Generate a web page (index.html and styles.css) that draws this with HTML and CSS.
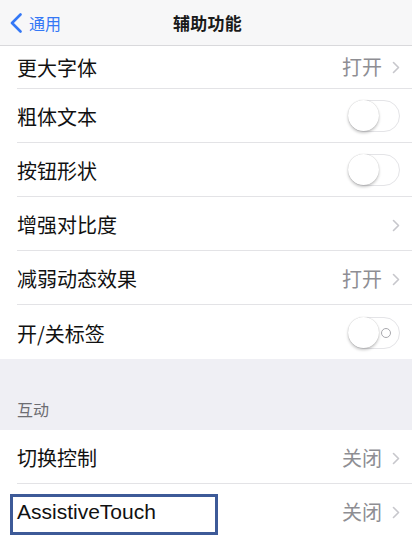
FILE: index.html
```html
<!DOCTYPE html>
<html lang="zh-CN">
<head>
<meta charset="utf-8">
<link rel="stylesheet" href="styles.css">
</head>
<body>
<div class="screen">
  <header class="nav">
    <div class="nav-back">
      <svg class="back-chev" width="12" height="20" viewBox="0 0 12 20"><path d="M10.5 1.5 L2 10 L10.5 18.5" fill="none" stroke="#3478f6" stroke-width="2.6" stroke-linecap="round" stroke-linejoin="round"/></svg>
      <span class="back-text">通用</span>
    </div>
    <div class="nav-title">辅助功能</div>
    <div></div>
  </header>

  <section class="group">
    <div class="row row-cut"><div class="row-inner"><span class="label">更大字体</span><span class="detail">打开<svg class="chev" width="8" height="13" viewBox="0 0 8 13"><path d="M1.5 1.5 L6.5 6.5 L1.5 11.5" fill="none" stroke="#c7c7cc" stroke-width="1.6" stroke-linecap="round" stroke-linejoin="round"/></svg></span></div></div>
    <div class="row"><div class="row-inner"><span class="label">粗体文本</span><span class="toggle"><span class="knob"></span></span></div></div>
    <div class="row"><div class="row-inner"><span class="label">按钮形状</span><span class="toggle"><span class="knob"></span></span></div></div>
    <div class="row"><div class="row-inner"><span class="label">增强对比度</span><span class="detail"><svg class="chev" width="8" height="13" viewBox="0 0 8 13"><path d="M1.5 1.5 L6.5 6.5 L1.5 11.5" fill="none" stroke="#c7c7cc" stroke-width="1.6" stroke-linecap="round" stroke-linejoin="round"/></svg></span></div></div>
    <div class="row"><div class="row-inner"><span class="label">减弱动态效果</span><span class="detail">打开<svg class="chev" width="8" height="13" viewBox="0 0 8 13"><path d="M1.5 1.5 L6.5 6.5 L1.5 11.5" fill="none" stroke="#c7c7cc" stroke-width="1.6" stroke-linecap="round" stroke-linejoin="round"/></svg></span></div></div>
    <div class="row row-last"><div class="row-inner"><span class="label">开/关标签</span><span class="toggle"><span class="knob"></span><span class="off-mark"></span></span></div></div>
  </section>

  <div class="section-header">互动</div>

  <section class="group">
    <div class="row"><div class="row-inner"><span class="label">切换控制</span><span class="detail">关闭<svg class="chev" width="8" height="13" viewBox="0 0 8 13"><path d="M1.5 1.5 L6.5 6.5 L1.5 11.5" fill="none" stroke="#c7c7cc" stroke-width="1.6" stroke-linecap="round" stroke-linejoin="round"/></svg></span></div></div>
    <div class="row row-last"><div class="row-inner"><span class="label label-latin">AssistiveTouch</span><span class="detail">关闭<svg class="chev" width="8" height="13" viewBox="0 0 8 13"><path d="M1.5 1.5 L6.5 6.5 L1.5 11.5" fill="none" stroke="#c7c7cc" stroke-width="1.6" stroke-linecap="round" stroke-linejoin="round"/></svg></span><span class="highlight"></span></div></div>
  </section>
</div>
</body>
</html>
```

FILE: styles.css
```css
* { box-sizing: border-box; }
html, body { margin: 0; padding: 0; }
body {
  width: 412px;
  height: 535px;
  overflow: hidden;
  background: #efeff4;
  font-family: "Noto Sans CJK SC", "Noto Sans", sans-serif;
  color: #111;
}
.screen { width: 412px; }

.nav {
  height: 46px;
  background: #f7f7f8;
  border-bottom: 1px solid #d9d9dc;
  display: grid;
  grid-template-columns: 1fr auto 1fr;
  align-items: center;
}
.nav-back {
  display: flex;
  align-items: center;
  gap: 7px;
  padding-left: 10px;
  color: #3478f6;
}
.back-chev { display: block; }
.back-text { font-size: 16px; line-height: 20px; }
.nav-title {
  font-size: 17px;
  font-weight: 700;
  color: #1a1a1a;
  letter-spacing: 0.3px;
  padding-left: 3px;
}

.group { background: #fff; }
.row {
  padding-left: 17px;
  height: 54px;
  position: relative;
}
.row-cut { height: 43px; }
.row-cut .row-inner { padding-bottom: 2px; }
.row-inner {
  height: 100%;
  display: flex;
  align-items: center;
  justify-content: space-between;
  padding-right: 12px;
  border-bottom: 1px solid #e3e3e6;
}
.row-last .row-inner { border-bottom: none; }
.label {
  font-size: 20px;
  line-height: 26px;
  padding-top: 3px;
  color: #111;
}
.label-latin {
  font-family: "Liberation Sans", Arial, sans-serif;
  font-size: 21px;
  padding-top: 1px;
}
.detail {
  display: flex;
  align-items: center;
  gap: 10px;
  font-size: 20px;
  line-height: 26px;
  color: #8e8e93;
  padding-top: 2px;
}
.chev { display: block; margin-top: 1px; }

.toggle {
  position: relative;
  width: 52px;
  height: 32px;
  border-radius: 16px;
  border: 1.5px solid #e4e4e7;
  background: #fff;
  margin-top: 1px;
}
.knob {
  position: absolute;
  left: -1px;
  top: -1px;
  width: 31px;
  height: 31px;
  border-radius: 50%;
  background: #fff;
  box-shadow: 0 2px 3px rgba(0,0,0,0.22), 0 0 1px rgba(0,0,0,0.25);
}
.off-mark {
  position: absolute;
  right: 8px;
  top: 10px;
  width: 10px;
  height: 10px;
  border-radius: 50%;
  border: 1.4px solid #a8a8ad;
}

.section-header {
  height: 71px;
  display: flex;
  align-items: flex-end;
  padding: 0 0 10px 17px;
  font-size: 16px;
  line-height: 22px;
  color: #6d6d72;
}

.highlight {
  position: absolute;
  left: 10px;
  top: 10px;
  width: 208px;
  height: 41px;
  border: 3px solid #3d5a98;
}
```
